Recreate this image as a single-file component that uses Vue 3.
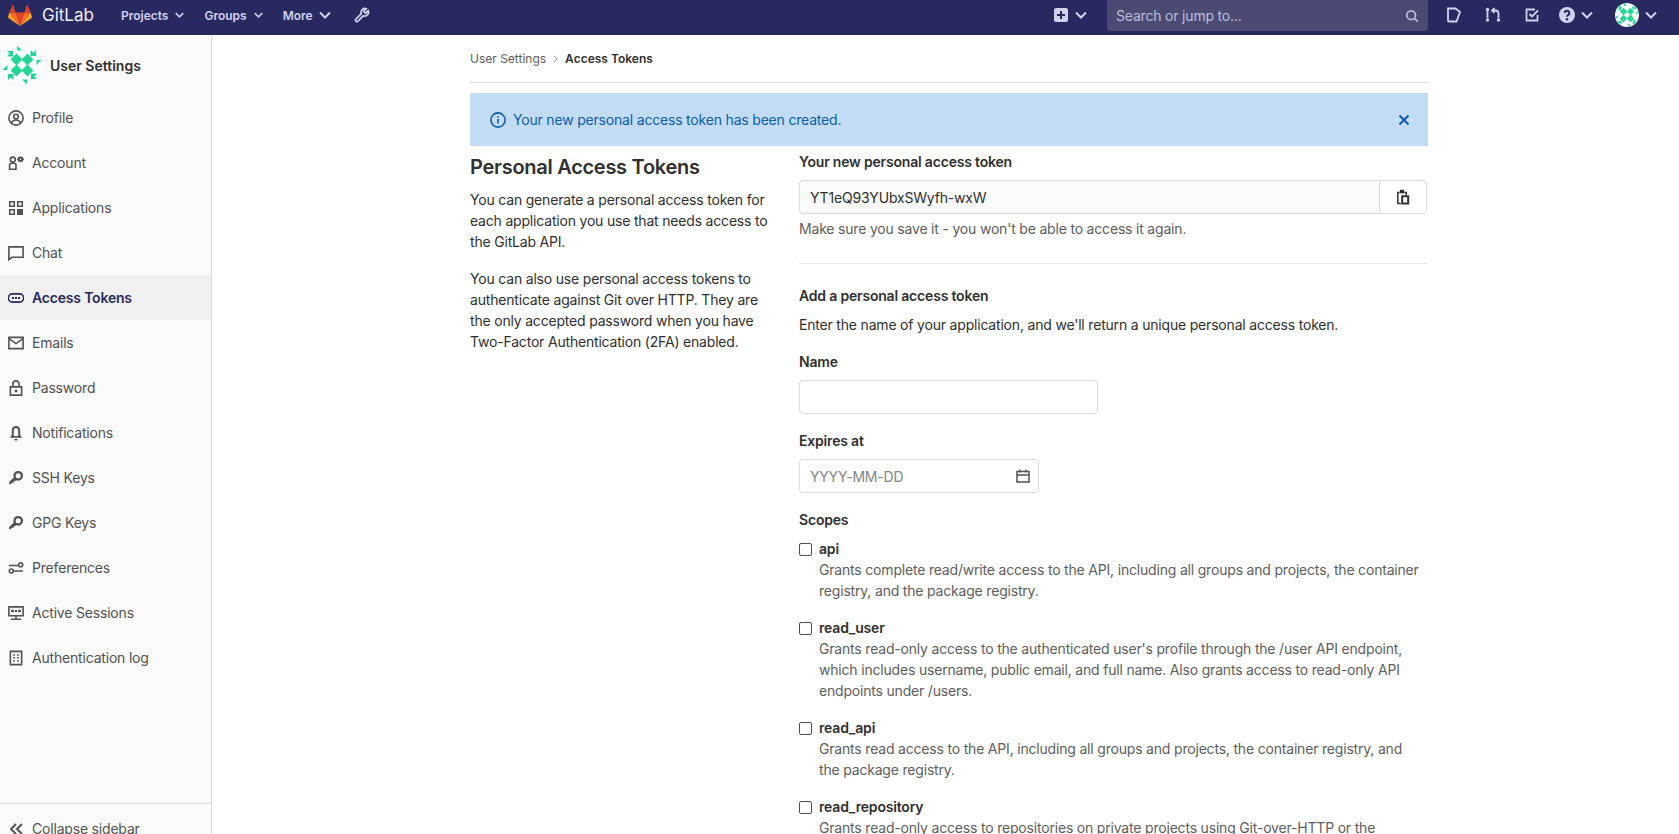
<script setup>
const sideItems = [
  { label: 'Profile', c: [[8, 6.5, 2.3]], s: 'M3.7 13c.6-2.2 2.3-3 4.3-3s3.7.8 4.3 3', ring: true },
  { label: 'Account', c: [[4.8, 4.6, 2.5]], s: 'M1.6 14.200v-4c0-1 .8-2 1.800-2h2.800c1 0 1.800 1 1.800 2v4z', f: 'M12.500 1l1 1.100 1.400-.2.300 1.400 1 1-1 1-.3 1.400-1.400-.2-1 1.100-1-1.100-1.400.2-.3-1.400-1-1 1-1 .3-1.400 1.400.2zM12.500 3.500a.8.8 0 1 0 0 1.600.8.8 0 0 0 0-1.600z' },
  { label: 'Applications', s: 'M1.750 1.750h4.500v4.500h-4.500zM9.750 1.750h4.500v4.500h-4.500zM1.750 9.750h4.500v4.500h-4.500z', f: 'M9 9h6v6H9z' },
  { label: 'Chat', s: 'M.9 1.900h14.200v10.400H4L.9 14.600z' },
  { label: 'Access Tokens', active: true, s: 'M4.500 3.900h7a3.900 3.900 0 0 1 0 8.200h-7a3.900 3.900 0 0 1 0-8.200z', f: 'M4 7h2v2H4zM7 7h2v2H7zM10 7h2v2h-2z' },
  { label: 'Emails', s: 'M.9 2.400h14.200v11.200H.9zM1 3.600l7 5 7-5' },
  { label: 'Password', s: 'M2.400 6.900h11.200v8.200H2.400zM4.900 6.700V4a3.100 3.100 0 0 1 6.200 0v2.700', f: 'M6.700 9.700h2.600v2.600H6.700z' },
  { label: 'Notifications', f: 'M8 1c2.700 0 4.200 2 4.200 4.800v4.300l1.800 2.700H2l1.800-2.700V5.800C3.800 3 5.300 1 8 1zM6.200 14h3.600a1.800 1.800 0 0 1-3.600 0z', hollow: 'M8 3c-1.300 0-2.200 1.100-2.200 2.800V11h4.400V5.800C10.200 4.100 9.300 3 8 3z' },
  { label: 'SSH Keys', key: true },
  { label: 'GPG Keys', key: true },
  { label: 'Preferences', s: 'M1 5.500h9.500M6 11h9', c: [[12.7, 4.800, 2], [3.300, 11, 2]] },
  { label: 'Active Sessions', s: 'M.9 1.900h14.200v8.800H.9zM8 11v2.500M3 14.300h10', f: 'M3 5h3v2H3zM7 5h2v2H7zM10 5h3v2h-3z' },
  { label: 'Authentication log', s: 'M2.400 1.400h11.200v13.200H2.400zM5.200 5h1.800M9 5h1.800M5.200 8h1.800M9 8h1.800M5.200 11h1.800M9 11h1.800' }
]

const chevron = 'M1 1.500l5 5 5-5'

const scopes = [
  { name: 'api', lines: ['Grants complete read/write access to the API, including all groups and projects, the container', 'registry, and the package registry.'] },
  { name: 'read_user', lines: ["Grants read-only access to the authenticated user's profile through the /user API endpoint,", 'which includes username, public email, and full name. Also grants access to read-only API', 'endpoints under /users.'] },
  { name: 'read_api', lines: ['Grants read access to the API, including all groups and projects, the container registry, and', 'the package registry.'] },
  { name: 'read_repository', lines: ['Grants read-only access to repositories on private projects using Git-over-HTTP or the', 'Repository Files API.'] }
]

const avatarTriangles = ['-5,-19.500 0,-14.500 -5,-14.500', '-15,-14 -9,-14 -9,-8', '8.500,-15 15,-9.500 8.500,-9.500']
const avatarRotations = [0, 90, 180, 270]
</script>

<template>
  <div class="page">
    <header class="topbar">
      <svg class="logo" viewBox="0 0 24 22" width="24" height="22">
        <polygon points="12,22 16.400,8.500 7.600,8.500" fill="#e24329" />
        <polygon points="12,22 7.600,8.500 1.400,8.500" fill="#fc6d26" />
        <polygon points="12,22 16.400,8.500 22.600,8.500" fill="#fc6d26" />
        <polygon points="1.400,8.500 0,12.900 .4,14 12,22" fill="#fca326" />
        <polygon points="22.600,8.500 24,12.900 23.600,14 12,22" fill="#fca326" />
        <polygon points="1.400,8.500 7.600,8.500 4.900,.3" fill="#e24329" />
        <polygon points="22.600,8.500 16.400,8.500 19.100,.3" fill="#e24329" />
      </svg>
      <span class="brand">GitLab</span>
      <a class="nav-link nav-projects">Projects</a>
      <svg class="chev-sm" viewBox="0 0 12 8" width="9" height="6"><path :d="chevron" /></svg>
      <a class="nav-link nav-groups">Groups</a>
      <svg class="chev-sm" viewBox="0 0 12 8" width="9" height="6"><path :d="chevron" /></svg>
      <a class="nav-link nav-more">More</a>
      <svg class="chev" viewBox="0 0 12 8" width="12" height="8"><path :d="chevron" /></svg>
      <svg class="wrench" viewBox="0 0 16 16" width="16" height="16"><path d="M14.300 3.700l-2.700 2.500-1.900-1.900L12.300 1.700a3.900 3.900 0 0 0-5 5L1.900 12a1.500 1.500 0 0 0 2.100 2.200l5.300-5.400a3.900 3.900 0 0 0 5-5.100z" /></svg>

      <div class="top-right">
        <svg class="plus" viewBox="0 0 14 14" width="14" height="14"><path fill-rule="evenodd" d="M2 0h10a2 2 0 0 1 2 2v10a2 2 0 0 1-2 2H2a2 2 0 0 1-2-2V2a2 2 0 0 1 2-2zM6 3v3H3v2h3v3h2V8h3V6H8V3z" /></svg>
        <svg class="chev chev-plus" viewBox="0 0 12 8" width="12" height="8"><path :d="chevron" /></svg>
        <div class="search">
          <span>Search or jump to...</span>
          <svg viewBox="0 0 16 16" width="14" height="14"><circle cx="7" cy="7" r="5" /><path d="M11 11l3.500 3.500" /></svg>
        </div>
        <svg class="ticon i-issue" viewBox="0 0 16 16" width="16" height="16"><path d="M2 1.500h7.500l4.500 3.500-3.500 9.500H3a1 1 0 0 1-1-1z" /></svg>
        <svg class="ticon i-mr" viewBox="0 0 16 16" width="16" height="16"><path d="M2.500 3v8M9.500 1.200L7 3.500l2.500 2.300M8 3.500h2.500a3 3 0 0 1 3 3V11" /><circle class="dot" cx="2.500" cy="2.500" r="1.700" /><circle class="dot" cx="2.500" cy="13" r="1.700" /><circle class="dot" cx="13.500" cy="13" r="1.700" /></svg>
        <svg class="ticon i-todo" viewBox="0 0 16 16" width="16" height="16"><path d="M13.500 8v5.500H2.500V2.500h8.500M5.500 7l2.500 2.500 6-6" /></svg>
        <svg class="help" viewBox="0 0 16 16" width="16" height="16"><circle cx="8" cy="8" r="8" fill="#d1d1f0" /><path d="M5.700 6a2.300 2.300 0 1 1 3.400 2c-.8.500-1.100.8-1.100 1.700" fill="none" stroke="#292961" stroke-width="2" /><circle cx="8" cy="12.300" r="1.200" fill="#292961" /></svg>
        <svg class="chev chev-help" viewBox="0 0 12 8" width="12" height="8"><path :d="chevron" /></svg>
        <svg class="avatar-small" viewBox="-19 -19 38 38" width="24" height="24" aria-hidden="true">
          <circle r="19" fill="#fbfbfb" />
          <g v-for="r in avatarRotations" :key="r" :transform="`rotate(${r})`" fill="#25d695">
            <polygon points="-11.500,-5.500 -5.500,-11.500 .5,-5.500 -5.500,.5" />
            <polygon v-for="t in avatarTriangles" :key="t" :points="t" />
          </g>
        </svg>
        <svg class="chev chev-avatar" viewBox="0 0 12 8" width="12" height="8"><path :d="chevron" /></svg>
      </div>
    </header>

    <div class="body-row">
      <aside class="sidebar">
        <div class="side-head">
          <svg class="avatar" viewBox="-19 -19 38 38" width="38" height="38" aria-hidden="true">
            <circle r="19" fill="#ffffff" />
            <g v-for="r in avatarRotations" :key="r" :transform="`rotate(${r})`" fill="#25d695">
              <polygon points="-11.500,-5.500 -5.500,-11.500 .5,-5.500 -5.500,.5" />
              <polygon v-for="t in avatarTriangles" :key="t" :points="t" />
            </g>
          </svg>
          <span class="side-title">User Settings</span>
        </div>
        <nav class="side-nav">
          <a v-for="item in sideItems" :key="item.label" class="side-item" :class="{ active: item.active }">
            <svg class="side-icon" viewBox="0 0 16 16" width="16" height="16">
              <circle v-if="item.ring" cx="8" cy="8" r="7.100" />
              <template v-if="item.key">
                <circle cx="10.200" cy="5.800" r="3.700" stroke-width="2.300" />
                <path class="filled" d="M6.500 6.800l2.700 2.700-1.900 1.600H5.800v1.700H4l-1.200 1.500H1.200v-2.400z" />
              </template>
              <circle v-for="c in item.c || []" :key="c.join()" :cx="c[0]" :cy="c[1]" :r="c[2]" />
              <path v-if="item.s" :d="item.s" />
              <path v-if="item.f" class="filled" fill-rule="evenodd" :d="item.f" />
              <path v-if="item.hollow" class="hollow" :d="item.hollow" />
            </svg>
            <span>{{ item.label }}</span>
          </a>
        </nav>
        <div class="collapse">
          <svg class="side-icon collapse-icon" viewBox="0 0 16 16" width="16" height="16"><path d="M8 3L3 8l5 5M14 3L9 8l5 5" /></svg>
          <span>Collapse sidebar</span>
        </div>
      </aside>

      <main class="main">
        <div class="crumbs">
          <span class="crumb">User Settings</span>
          <svg viewBox="0 0 6 10" width="5" height="8"><path d="M1 1l4 4-4 4" /></svg>
          <strong>Access Tokens</strong>
        </div>

        <div class="alert">
          <svg class="alert-info" viewBox="0 0 16 16" width="16" height="16"><circle cx="8" cy="8" r="7.100" /><path d="M8 7v4.500M8 4.200v1.600" /></svg>
          <span>Your new personal access token has been created.</span>
          <svg class="alert-close" viewBox="0 0 12 12" width="12" height="12"><path d="M1.500 1.500l9 9M10.500 1.500l-9 9" /></svg>
        </div>

        <div class="columns">
          <section class="intro">
            <h4>Personal Access Tokens</h4>
            <p>You can generate a personal access token for each application you use that needs access to the GitLab API.</p>
            <p class="second">You can also use personal access tokens to authenticate against Git over HTTP. They are the only accepted password when you have Two-Factor Authentication (2FA) enabled.</p>
          </section>

          <section class="forms">
            <label class="label first">Your new personal access token</label>
            <div class="token-group">
              <input class="token-input" readonly value="YT1eQ93YUbxSWyfh-wxW" />
              <button class="copy" type="button" aria-label="Copy">
                <svg viewBox="0 0 16 16" width="16" height="16"><path d="M4.500 3.500H2.800v11h3" /><path d="M9.500 3.500h1.700V6" /><path class="thick" d="M4.800 3.200h4.400" /><path class="thick" d="M6 3V1.800h2V3" /><path d="M7.200 7.200h6v7.300h-6z" stroke-width="2" /></svg>
              </button>
            </div>
            <p class="help-text">Make sure you save it - you won't be able to access it again.</p>
            <hr />
            <h5>Add a personal access token</h5>
            <p class="desc">Enter the name of your application, and we'll return a unique personal access token.</p>
            <label class="label gap">Name</label>
            <input class="text-input name-input" type="text" />
            <label class="label gap">Expires at</label>
            <div class="date-wrap">
              <input class="text-input date-input" type="text" placeholder="YYYY-MM-DD" />
              <svg class="date-icon" viewBox="0 0 16 16" width="16" height="16"><path d="M2 3.500h12v10.500H2zM2 7h12M5 1.500v3M11 1.500v3" /></svg>
            </div>
            <label class="label gap">Scopes</label>
            <div class="scopes">
              <div v-for="scope in scopes" :key="scope.name" class="scope">
                <input type="checkbox" class="check" />
                <div>
                  <div class="scope-name">{{ scope.name }}</div>
                  <div v-for="line in scope.lines" :key="line" class="scope-line">{{ line }}</div>
                </div>
              </div>
            </div>
          </section>
        </div>
      </main>
    </div>
  </div>
</template>

<style>
html, body { margin: 0; overflow: hidden; background: #fff; }
</style>

<style scoped>
.page {
  width: 1679px;
  height: 834px;
  overflow: hidden;
  display: flex;
  flex-direction: column;
  font-family: Inter, "Noto Sans", sans-serif;
  font-size: 14px;
  line-height: 21px;
  letter-spacing: -0.19px;
  color: #303030;
}
svg { flex: none; display: block; }
.topbar {
  height: 35px;
  flex: none;
  display: flex;
  align-items: center;
  background: #292961;
  padding: 0 0 5px 8px;
  box-sizing: border-box;
}
.brand { margin-left: 10px; font-size: 17px; color: #efeff8; line-height: 30px; letter-spacing: 0; }
.nav-link { font-size: 12px; font-weight: 600; color: #d1d1f0; letter-spacing: 0; }
.nav-projects { margin-left: 27px; }
.nav-groups { margin-left: 20px; }
.nav-more { margin-left: 20px; }
.chev-sm, .chev { fill: none; stroke: #d1d1f0; stroke-width: 2; }
.chev-sm { margin-left: 7px; }
.chev { margin-left: 6px; }
.wrench { margin-left: 23px; fill: none; stroke: #d1d1f0; stroke-width: 1.700; }
.top-right { margin-left: auto; padding-right: 22px; display: flex; align-items: center; height: 30px; }
.plus { fill: #d1d1f0; }
.chev-plus { margin-left: 7px; }
.search {
  margin-left: 20px;
  width: 321px;
  height: 31px;
  align-self: flex-start;
  box-sizing: border-box;
  padding: 0 9px 0 9px;
  display: flex;
  align-items: center;
  justify-content: space-between;
  background: #4a4a73;
  border-radius: 0 0 4px 4px;
  color: #bdbddb;
  font-size: 14px;
}
.search svg { fill: none; stroke: #bdbddb; stroke-width: 2; }
.ticon { fill: none; stroke: #d1d1f0; stroke-width: 1.800; }
.ticon .dot { fill: #d1d1f0; stroke: none; }
.i-issue { margin-left: 18px; }
.i-mr { margin-left: 23px; }
.i-todo { margin-left: 23px; }
.help { margin-left: 19px; }
.chev-help { margin-left: 6px; }
.avatar-small { margin-left: 22px; }
.chev-avatar { margin-left: 6px; }

.body-row { flex: 1; display: flex; min-height: 0; }
.sidebar {
  width: 212px;
  flex: none;
  box-sizing: border-box;
  display: flex;
  flex-direction: column;
  background: #fafafa;
  border-right: 1px solid #dbdbdb;
}
.side-head { height: 60px; display: flex; align-items: center; padding-left: 3px; }
.side-title { margin-left: 9px; font-weight: 600; color: #303030; letter-spacing: 0; }
.side-nav { display: flex; flex-direction: column; flex: 1; }
.side-item {
  height: 45px;
  display: flex;
  align-items: center;
  gap: 8px;
  padding-left: 8px;
  color: #525252;
}
.side-icon { fill: none; stroke: #525252; stroke-width: 1.600; }
.side-icon .filled { fill: #525252; stroke: none; }
.side-icon .hollow { fill: #fafafa; stroke: none; }
.collapse-icon { stroke-width: 2; }
.side-item.active { background: #f0f0f0; color: #292961; font-weight: 600; }
.active .side-icon { stroke: #292961; }
.active .side-icon .filled { fill: #292961; }
.collapse {
  height: 50px;
  flex: none;
  display: flex;
  align-items: center;
  gap: 8px;
  padding: 0 0 0 8px;
  border-top: 1px solid #dbdbdb;
  box-sizing: border-box;
  color: #525252;
  margin-bottom: -19px;
}

.main { width: 958px; margin-left: 258px; flex: none; }
.crumbs {
  height: 47px;
  box-sizing: content-box;
  display: flex;
  align-items: center;
  gap: 7px;
  font-size: 12px;
  letter-spacing: 0;
  border-bottom: 1px solid #dbdbdb;
  margin-bottom: 10px;
}
.crumb { color: #5e5e5e; }
.crumbs svg { fill: none; stroke: #8c8c8c; stroke-width: 1.200; }
.crumbs strong { font-weight: 600; color: #303030; }
.alert {
  height: 53px;
  display: flex;
  align-items: center;
  padding: 0 18px 0 20px;
  box-sizing: border-box;
  background: #c2dcf5;
  color: #0b5cad;
}
.alert-info { fill: none; stroke: #0b5cad; stroke-width: 1.600; margin-right: 7px; }
.alert-close { margin-left: auto; fill: none; stroke: #0b5cad; stroke-width: 2; }
.columns { display: grid; grid-template-columns: 329px 629px; }
h4 { margin: 9px 0 10px; font-size: 20px; line-height: 24px; font-weight: 600; letter-spacing: -0.28px; color: #303030; }
.intro p { margin: 0; width: 300px; }
.intro .second { margin-top: 16px; }
.forms { padding-top: 5px; }
.label { display: block; font-weight: 600; color: #303030; }
.gap { margin-top: 16px; }
.token-group { display: flex; margin-top: 8px; height: 34px; width: 628px; }
.token-input {
  flex: 1;
  min-width: 0;
  box-sizing: border-box;
  height: 34px;
  padding: 0 10px;
  border: 1px solid #dbdbdb;
  border-radius: 4px 0 0 4px;
  background: #fafafa;
  font: 14px Inter, sans-serif;
  letter-spacing: -0.19px;
  color: #303030;
  outline: none;
}
.copy {
  width: 48px;
  height: 34px;
  margin-left: -1px;
  padding: 0;
  display: flex;
  align-items: center;
  justify-content: center;
  background: #fff;
  border: 1px solid #dbdbdb;
  border-radius: 0 4px 4px 0;
}
.copy svg { fill: none; stroke: #303030; stroke-width: 1.500; }
.copy .thick { stroke-width: 2.200; }
.help-text { margin: 4px 0 0; color: #5e5e5e; }
hr { margin: 24px 0 21px; width: 628px; border: 0; border-top: 1px solid #e8e8e8; height: 0; }
h5 { margin: 0; font-size: 14px; line-height: 21px; font-weight: 600; }
.desc { margin: 8px 0 0; }
.text-input {
  display: block;
  box-sizing: border-box;
  height: 34px;
  padding: 0 10px;
  border: 1px solid #dbdbdb;
  border-radius: 4px;
  background: #fff;
  font: 14px Inter, sans-serif;
  letter-spacing: -0.19px;
  outline: none;
}
.text-input::placeholder { color: #868686; opacity: 1; }
.name-input { width: 299px; margin-top: 8px; }
.date-wrap { position: relative; width: 240px; margin-top: 8px; }
.date-input { width: 100%; }
.date-icon {
  position: absolute;
  right: 8px;
  top: 9px;
  fill: none;
  stroke: #525252;
  stroke-width: 1.500;
}
.scopes { margin-top: 8px; display: flex; flex-direction: column; gap: 16px; }
.scope { display: flex; }
.check {
  appearance: none;
  width: 13px;
  height: 13px;
  margin: 5px 7px 0 0;
  flex: none;
  box-sizing: border-box;
  border: 1px solid #4f4f4f;
  border-radius: 2px;
  background: #fff;
}
.scope-name { font-weight: 600; color: #303030; }
.scope-line { color: #5e5e5e; white-space: nowrap; }
</style>
